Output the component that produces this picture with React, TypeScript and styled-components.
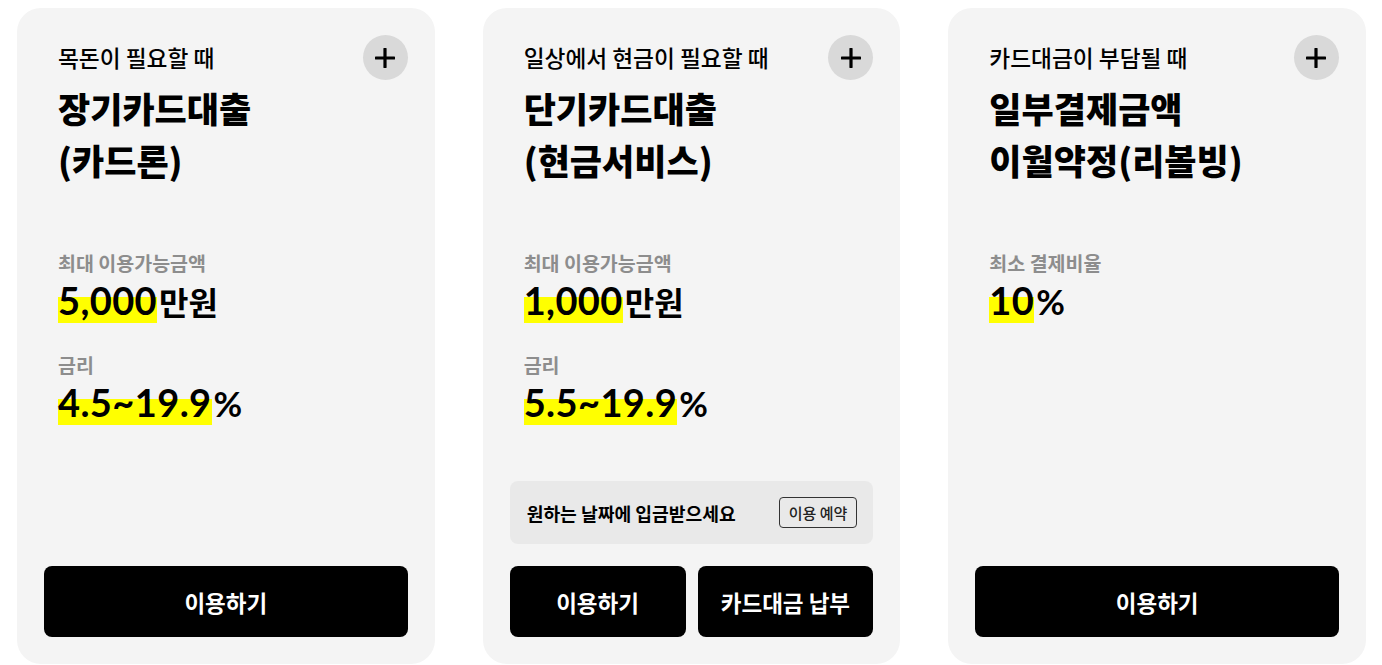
import React from "react";
import styled, { createGlobalStyle } from "styled-components";

const GlobalStyle = createGlobalStyle`
  html, body { margin: 0; padding: 0; background: #ffffff; }
  body { font-family: "Noto Sans CJK KR", "Noto Sans", sans-serif; color: #000; }
  * { box-sizing: border-box; }
`;

const Page = styled.div`
  display: grid;
  grid-template-columns: repeat(3, 1fr);
  column-gap: 48px;
  padding: 8px 16px 0 17px;
  height: 665px;
`;

const Card = styled.section`
  background: #f4f4f4;
  border-radius: 24px;
  padding: 27px;
  height: 656px;
  display: flex;
  flex-direction: column;
`;

const Header = styled.div`
  display: flex;
  justify-content: space-between;
  align-items: flex-start;
`;

const Heading = styled.div`
  padding: 7px 0 0 14px;
  display: flex;
  flex-direction: column;
  gap: 8px;
`;

const Subtitle = styled.p`
  margin: 0;
  font-size: 22.7px;
  line-height: 32px;
  font-weight: 500;
`;

const Title = styled.h2`
  margin: 0;
  font-size: 35px;
  line-height: 52px;
  font-weight: 800;
`;

const PlusButton = styled.button`
  flex: none;
  width: 45px;
  height: 45px;
  border-radius: 50%;
  border: none;
  background: #d9d9d9;
  display: flex;
  align-items: center;
  justify-content: center;
  padding: 0;
  cursor: pointer;
`;

const InfoList = styled.div`
  margin-top: 65px;
  padding-left: 14px;
  display: flex;
  flex-direction: column;
  gap: 30px;
`;

const InfoItem = styled.div`
  display: flex;
  flex-direction: column;
  gap: 2px;
`;

const Label = styled.span`
  font-size: 19.5px;
  line-height: 24px;
  font-weight: 700;
  color: #8d8d8d;
`;

const Value = styled.div`
  font-family: "Lato", "Noto Sans CJK KR", sans-serif;
  font-size: 38px;
  line-height: 46px;
  font-weight: 700;
  white-space: nowrap;
`;

const Highlight = styled.span`
  background: linear-gradient(to bottom, transparent 43%, #ffff00 43%);
  letter-spacing: 0.4px;
`;

const Unit = styled.span<{ $korean?: boolean }>`
  font-family: ${(p) => (p.$korean ? `"Noto Sans CJK KR", sans-serif` : `"Lato", sans-serif`)};
  font-size: ${(p) => (p.$korean ? "32px" : "35px")};
  line-height: 1;
  margin-left: 2px;
`;

const Bottom = styled.div`
  margin-top: auto;
  display: flex;
  flex-direction: column;
  gap: 22px;
`;

const Notice = styled.div`
  height: 63px;
  background: #e9e9e9;
  border-radius: 8px;
  padding: 0 16px 0 17px;
  display: flex;
  align-items: center;
  justify-content: space-between;
`;

const NoticeText = styled.span`
  font-size: 18.2px;
  font-weight: 700;
`;

const ReserveButton = styled.button`
  height: 31px;
  padding: 0 9px;
  border: 1px solid #333;
  border-radius: 4px;
  background: transparent;
  font-family: "Noto Sans CJK KR", sans-serif;
  font-size: 15px;
  font-weight: 500;
  color: #222;
`;

const ButtonRow = styled.div`
  display: flex;
  gap: 12px;
`;

const ActionButton = styled.button`
  flex: 1;
  height: 71px;
  border: none;
  border-radius: 8px;
  background: #000;
  color: #fff;
  font-family: "Noto Sans CJK KR", sans-serif;
  font-size: 22.5px;
  font-weight: 700;
  cursor: pointer;
`;

const PlusIcon = () => (
  <svg width="20" height="20" viewBox="0 0 20 20">
    <path d="M10 1v18M1 10h18" stroke="#000" strokeWidth="3.2" strokeLinecap="round" />
  </svg>
);

type Info = { label: string; num: string; unit: string; korean?: boolean };

type CardData = {
  sub: string;
  title: string[];
  infos: Info[];
  notice?: boolean;
  buttons: string[];
};

const cards: CardData[] = [
  {
    sub: "목돈이 필요할 때",
    title: ["장기카드대출", "(카드론)"],
    infos: [
      { label: "최대 이용가능금액", num: "5,000", unit: "만원", korean: true },
      { label: "금리", num: "4.5~19.9", unit: "%" },
    ],
    buttons: ["이용하기"],
  },
  {
    sub: "일상에서 현금이 필요할 때",
    title: ["단기카드대출", "(현금서비스)"],
    infos: [
      { label: "최대 이용가능금액", num: "1,000", unit: "만원", korean: true },
      { label: "금리", num: "5.5~19.9", unit: "%" },
    ],
    notice: true,
    buttons: ["이용하기", "카드대금 납부"],
  },
  {
    sub: "카드대금이 부담될 때",
    title: ["일부결제금액", "이월약정(리볼빙)"],
    infos: [{ label: "최소 결제비율", num: "10", unit: "%" }],
    buttons: ["이용하기"],
  },
];

export default function App() {
  return (
    <>
      <GlobalStyle />
      <Page>
        {cards.map((c) => (
          <Card key={c.sub}>
            <Header>
              <Heading>
                <Subtitle>{c.sub}</Subtitle>
                <Title>
                  {c.title[0]}
                  <br />
                  {c.title[1]}
                </Title>
              </Heading>
              <PlusButton aria-label="더보기">
                <PlusIcon />
              </PlusButton>
            </Header>
            <InfoList>
              {c.infos.map((i) => (
                <InfoItem key={i.label}>
                  <Label>{i.label}</Label>
                  <Value>
                    <Highlight>{i.num}</Highlight>
                    <Unit $korean={i.korean}>{i.unit}</Unit>
                  </Value>
                </InfoItem>
              ))}
            </InfoList>
            <Bottom>
              {c.notice && (
                <Notice>
                  <NoticeText>원하는 날짜에 입금받으세요</NoticeText>
                  <ReserveButton>이용 예약</ReserveButton>
                </Notice>
              )}
              <ButtonRow>
                {c.buttons.map((b) => (
                  <ActionButton key={b}>{b}</ActionButton>
                ))}
              </ButtonRow>
            </Bottom>
          </Card>
        ))}
      </Page>
    </>
  );
}
